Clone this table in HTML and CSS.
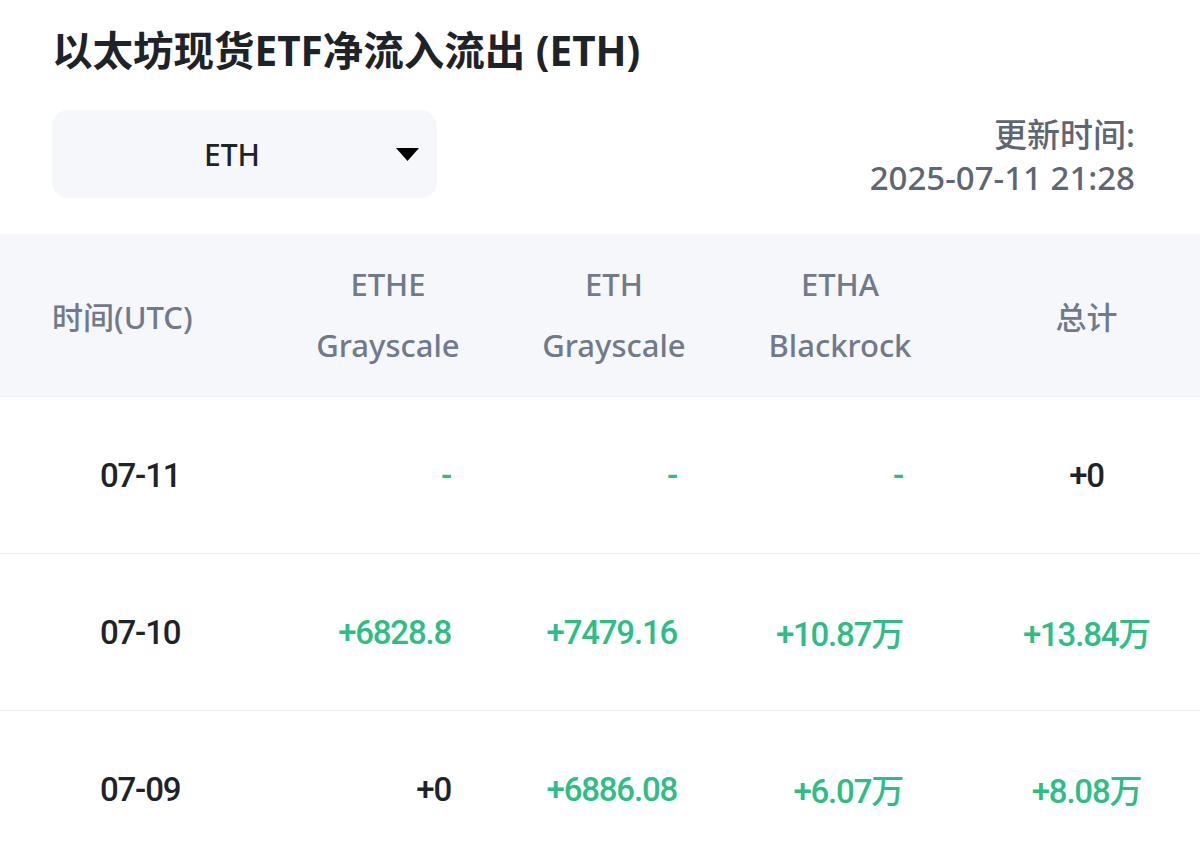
FILE: index.html
```html
<!DOCTYPE html>
<html lang="zh">
<head>
<meta charset="utf-8">
<title>以太坊现货ETF净流入流出 (ETH)</title>
<link rel="stylesheet" href="styles.css">
</head>
<body>
<div class="page">
  <h1 class="title">以太坊现货ETF净流入流出 (ETH)</h1>
  <div class="controls">
    <div class="select">
      <span class="select-value">ETH</span>
      <svg class="caret" width="23" height="13" viewBox="0 0 23 13"><path d="M0 0 H23 L11.5 13 Z" fill="#000"/></svg>
    </div>
    <div class="updated">
      <div>更新时间:</div>
      <div>2025-07-11 21:28</div>
    </div>
  </div>
  <div class="table">
    <div class="row head">
      <div class="cell c1">时间(UTC)</div>
      <div class="cell cn"><span>ETHE</span><span>Grayscale</span></div>
      <div class="cell cn"><span>ETH</span><span>Grayscale</span></div>
      <div class="cell cn"><span>ETHA</span><span>Blackrock</span></div>
      <div class="cell ct">总计</div>
    </div>
    <div class="row">
      <div class="cell c1 date">07-11</div>
      <div class="cell num up">-</div>
      <div class="cell num up">-</div>
      <div class="cell num up">-</div>
      <div class="cell tot">+0</div>
    </div>
    <div class="row">
      <div class="cell c1 date">07-10</div>
      <div class="cell num up">+6828.8</div>
      <div class="cell num up">+7479.16</div>
      <div class="cell num up">+10.87万</div>
      <div class="cell tot up">+13.84万</div>
    </div>
    <div class="row">
      <div class="cell c1 date">07-09</div>
      <div class="cell num">+0</div>
      <div class="cell num up">+6886.08</div>
      <div class="cell num up">+6.07万</div>
      <div class="cell tot up">+8.08万</div>
    </div>
  </div>
</div>
</body>
</html>
```
FILE: styles.css
```css
html, body {
  margin: 0;
  padding: 0;
  background: #ffffff;
}
body {
  font-family: "Noto Sans", "Noto Sans CJK SC", sans-serif;
  color: #1e2329;
  overflow: hidden;
}
.page {
  width: 1200px;
}
.title {
  margin: 0;
  padding: 24px 0 0 52px;
  font-size: 40.5px;
  line-height: 54px;
  font-weight: 700;
  color: #1e2329;
}
.controls {
  display: flex;
  justify-content: space-between;
  align-items: flex-start;
  padding: 32px 65px 0 52px;
}
.select {
  width: 385px;
  height: 88px;
  box-sizing: border-box;
  border-radius: 16px;
  background: #f5f7fa;
  display: flex;
  align-items: center;
  padding: 0 18px 0 0;
}
.select-value {
  flex: 1;
  text-align: center;
  font-size: 30px;
  font-weight: 500;
  color: #1e2329;
  padding-left: 16px;
}
.caret {
  display: block;
}
.updated {
  text-align: right;
  font-size: 33px;
  line-height: 43px;
  font-weight: 500;
  color: #5e6673;
  padding-top: 3px;
}
.table {
  margin-top: 35px;
}
.row {
  display: grid;
  grid-template-columns: 275px 226px 226px 226px 247px;
  height: 156px;
  border-bottom: 1px solid #eceef1;
  align-items: center;
}
.row.head {
  height: 162px;
  background: #f5f7fa;
  border-bottom: 1px solid #eef0f3;
  color: #707a8a;
  font-size: 31px;
  font-weight: 500;
}
.cell {
  box-sizing: border-box;
}
.head .c1 {
  padding-left: 52px;
}
.head .cn {
  display: flex;
  flex-direction: column;
  align-items: center;
  line-height: 61px;
}
.head .ct {
  text-align: center;
  padding-left: 20px;
}
.date {
  padding-left: 100px;
}
.date, .num, .tot {
  font-family: "Roboto", "Noto Sans CJK SC", sans-serif;
  font-size: 33px;
  font-weight: 500;
  letter-spacing: -1.2px;
  color: #1e2329;
}
.num {
  text-align: right;
  padding-right: 50px;
}
.tot {
  text-align: center;
  padding-left: 20px;
}
.up {
  color: #2ebd85;
}
```
